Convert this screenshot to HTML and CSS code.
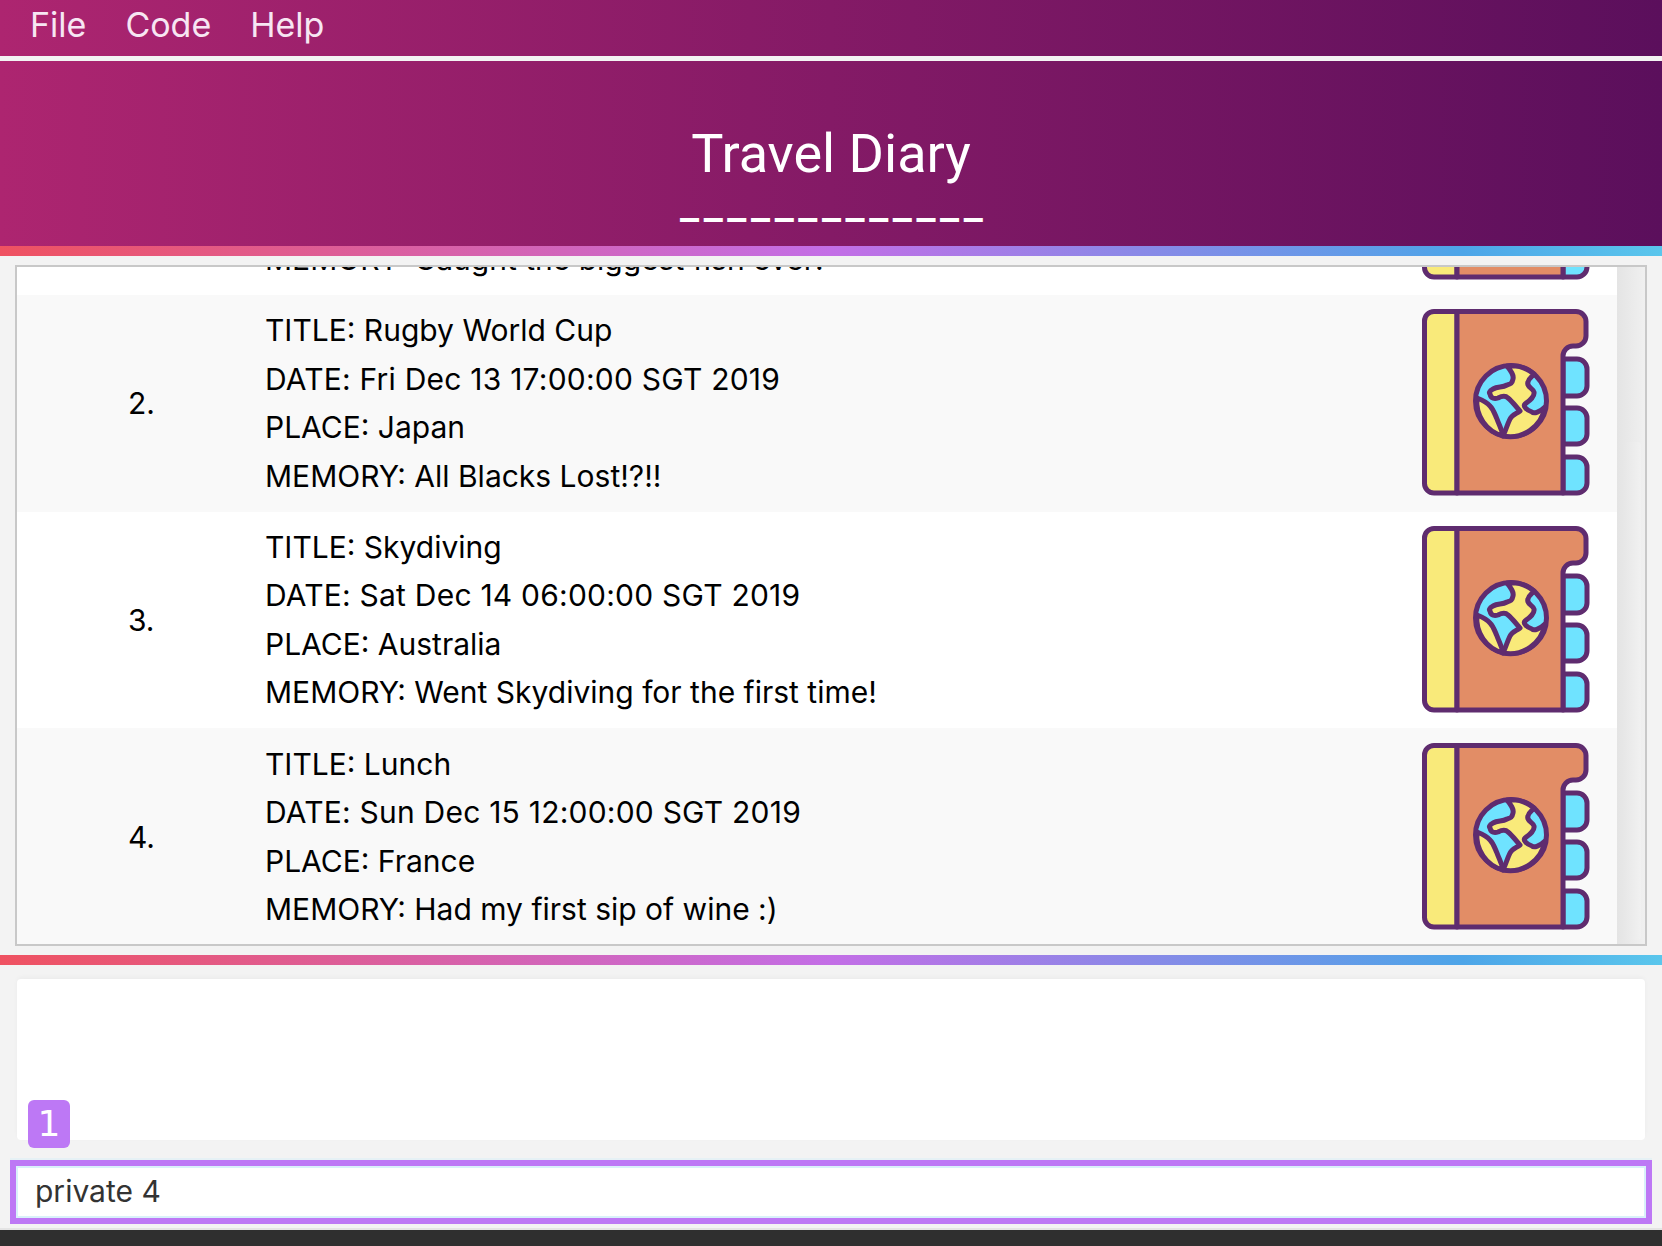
FILE: index.html
```html
<!DOCTYPE html>
<html lang="en">
<head>
    <meta charset="UTF-8">
    <title>Travel Diary</title>
    <link rel="stylesheet" href="styles.css">
</head>
<body>
    <svg class="defs" width="0" height="0">
        <symbol id="diary" viewBox="0 0 168 188">
            <g stroke="#5f2c6f" stroke-width="5" stroke-linejoin="round">
                <path class="blue" d="M141 50H155a10 10 0 0 1 10 10V77a10 10 0 0 1-10 10H141Z"/>
                <path class="blue" d="M141 99H155a10 10 0 0 1 10 10V125a10 10 0 0 1-10 10H141Z"/>
                <path class="blue" d="M141 148H155a10 10 0 0 1 10 10V174a10 10 0 0 1-10 10H141Z"/>
                <path class="yellow" d="M12 2.5H35V184H12a9.5 9.5 0 0 1-9.5-9.5V12A9.5 9.5 0 0 1 12 2.5Z"/>
                <path class="brown" d="M35 2.5H154a10 10 0 0 1 10 10V27a10 10 0 0 1-10 10H151a10 10 0 0 0-10 10V184H35Z"/>
                <circle class="blue" cx="89" cy="92" r="35.5"/>
                <path class="yellow" d="M85 57C89 62 92 66 91 70C90 75 88 75 85 76C80 79 76 77 71 80C67 82 67 84 68 85C69 90 73 90 76 89C80 87 84 87 86 89C91 93 94 98 98 102C94 105 90 106 88 110C85 116 84 121 81 127A35.5 35.5 0 0 0 123 98C118 103 112 105 110 103C104 101 101 97 103 95C107 92 113 88 112 83C111 79 104 78 106 73C107 69 110 68 112 65A35.5 35.5 0 0 0 85 57Z"/>
                <path class="yellow" d="M55 89C60 91 65 93 68 97C72 101 73 106 75 110C77 116 80 120 81 127A35.5 35.5 0 0 1 55 89Z"/>
            </g>
        </symbol>
    </svg>

    <nav class="menubar">
        <span>File</span>
        <span>Code</span>
        <span>Help</span>
    </nav>
    <header class="banner">
        <h1>Travel Diary</h1>
        <div class="dashes">–––––––––––––</div>
    </header>
    <div class="rainbow"></div>

    <section class="panel">
        <div class="list">
            <div class="row row-cut">
                <div class="num"></div>
                <div class="lines">
                    <p>MEMORY: Caught the biggest fish ever!</p>
                </div>
                <svg class="icon"><use href="#diary"/></svg>
            </div>
            <div class="row row-alt">
                <div class="num">2.</div>
                <div class="lines">
                    <p>TITLE: Rugby World Cup</p>
                    <p class="date">DATE: Fri Dec 13 17:00:00 SGT 2019</p>
                    <p>PLACE: Japan</p>
                    <p>MEMORY: All Blacks Lost!?!!</p>
                </div>
                <svg class="icon"><use href="#diary"/></svg>
            </div>
            <div class="row">
                <div class="num">3.</div>
                <div class="lines">
                    <p>TITLE: Skydiving</p>
                    <p class="date">DATE: Sat Dec 14 06:00:00 SGT 2019</p>
                    <p>PLACE: Australia</p>
                    <p>MEMORY: Went Skydiving for the first time!</p>
                </div>
                <svg class="icon"><use href="#diary"/></svg>
            </div>
            <div class="row row-alt">
                <div class="num">4.</div>
                <div class="lines">
                    <p>TITLE: Lunch</p>
                    <p class="date">DATE: Sun Dec 15 12:00:00 SGT 2019</p>
                    <p>PLACE: France</p>
                    <p>MEMORY: Had my first sip of wine :)</p>
                </div>
                <svg class="icon"><use href="#diary"/></svg>
            </div>
        </div>
        <div class="scrollbar"><div class="thumb"></div></div>
    </section>

    <div class="rainbow rainbow-low"></div>

    <section class="result"></section>
    <div class="badge">1</div>
    <div class="command">private 4</div>
    <footer class="statusbar"></footer>
</body>
</html>
```

FILE: styles.css
```css
*{
    margin: 0;
    padding: 0;
    box-sizing: border-box;
}
html, body{
    height: 1246px;
    overflow: hidden;
}
body{
    position: relative;
    display: flex;
    flex-direction: column;
    background: #f3f3f3;
    font-family: "Inter", "Liberation Sans", sans-serif;
    color: #000;
}
.defs{
    position: absolute;
}
.blue{ fill: #6fe3ff; }
.yellow{ fill: #f9ea7a; }
.brown{ fill: #e28d66; }

.menubar{
    height: 56px;
    flex: none;
    display: flex;
    align-items: center;
    gap: 39px;
    padding: 0 0 8px 30px;
    background: linear-gradient(to right, #ad2570, #5b0f5c);
    color: #f7e6f3;
    font-size: 34px;
}
.banner{
    height: 185px;
    flex: none;
    margin-top: 5px;
    display: flex;
    flex-direction: column;
    align-items: center;
    background: linear-gradient(to right, #ad2570, #5b0f5c);
    color: #fff;
    font-family: "Roboto", sans-serif;
}
.banner h1{
    font-size: 54px;
    font-weight: 400;
    line-height: 60px;
    margin-top: 63px;
}
.dashes{
    font-size: 37.5px;
    font-weight: 700;
    line-height: 40px;
    margin-top: 16px;
}
.rainbow{
    height: 10px;
    flex: none;
    background: linear-gradient(to right, #ef5261, #c36ee6 50%, #4da5e8 88%, #5ac6ec);
}
.rainbow-low{
    margin-top: 9px;
}

.panel{
    height: 681px;
    flex: none;
    margin: 9px 15px 0;
    display: flex;
    border: 2px solid #c8c8c8;
    background: #fff;
    overflow: hidden;
}
.list{
    flex: 1;
    margin-bottom: -1px;
    display: flex;
    flex-direction: column;
    justify-content: flex-end;
    overflow: hidden;
}
.row{
    height: 216.7px;
    flex: none;
    display: flex;
    align-items: center;
    padding-right: 27px;
    background: #fff;
}
.row-alt{
    background: #f9f9f9;
}
.row-cut{
    align-items: flex-end;
    padding-bottom: 11.5px;
}
.row-cut .icon{
    margin-bottom: 2.5px;
}
.num{
    width: 248px;
    padding-left: 111px;
    font-size: 30px;
}
.num:empty{
    height: 1px;
}
.lines{
    flex: 1;
    font-size: 30px;
    line-height: 48.5px;
}
.date{
    letter-spacing: 0.22px;
}
.icon{
    width: 168px;
    height: 188px;
    flex: none;
}
.scrollbar{
    width: 28px;
    flex: none;
    display: flex;
    flex-direction: column;
    justify-content: flex-end;
    padding: 0 4px 4px 5px;
    background: linear-gradient(to right, #e4e4e4, #f0f0f0);
}
.thumb{
    height: 498px;
    border-radius: 4px;
    background: linear-gradient(to right, #e6e6e6, #f1f1f1);
}

.result{
    height: 161px;
    flex: none;
    margin: 14px 17px 0;
    background: #fff;
    border-radius: 4px;
    box-shadow: 0 -2px 4px rgba(0,0,0,0.03);
}
.badge{
    position: absolute;
    left: 28px;
    top: 1100px;
    width: 42px;
    height: 48px;
    border-radius: 6px;
    background: #bd78f5;
    color: #fff;
    font-family: "DejaVu Sans", sans-serif;
    font-size: 36px;
    line-height: 48px;
    text-align: center;
}
.command{
    height: 64px;
    flex: none;
    margin: 20px 10px 0;
    padding-left: 19px;
    border: 6px solid #bd78f5;
    background: #fff;
    box-shadow: inset 0 0 0 2px #d9f1fa, 0 -2px 0 #e6f1f5;
    color: #333;
    font-size: 30px;
    line-height: 50px;
}
.statusbar{
    flex: 1;
    margin-top: 4px;
    border-top: 2px solid #e4e4e4;
    background: #2f2f2f;
}
```
